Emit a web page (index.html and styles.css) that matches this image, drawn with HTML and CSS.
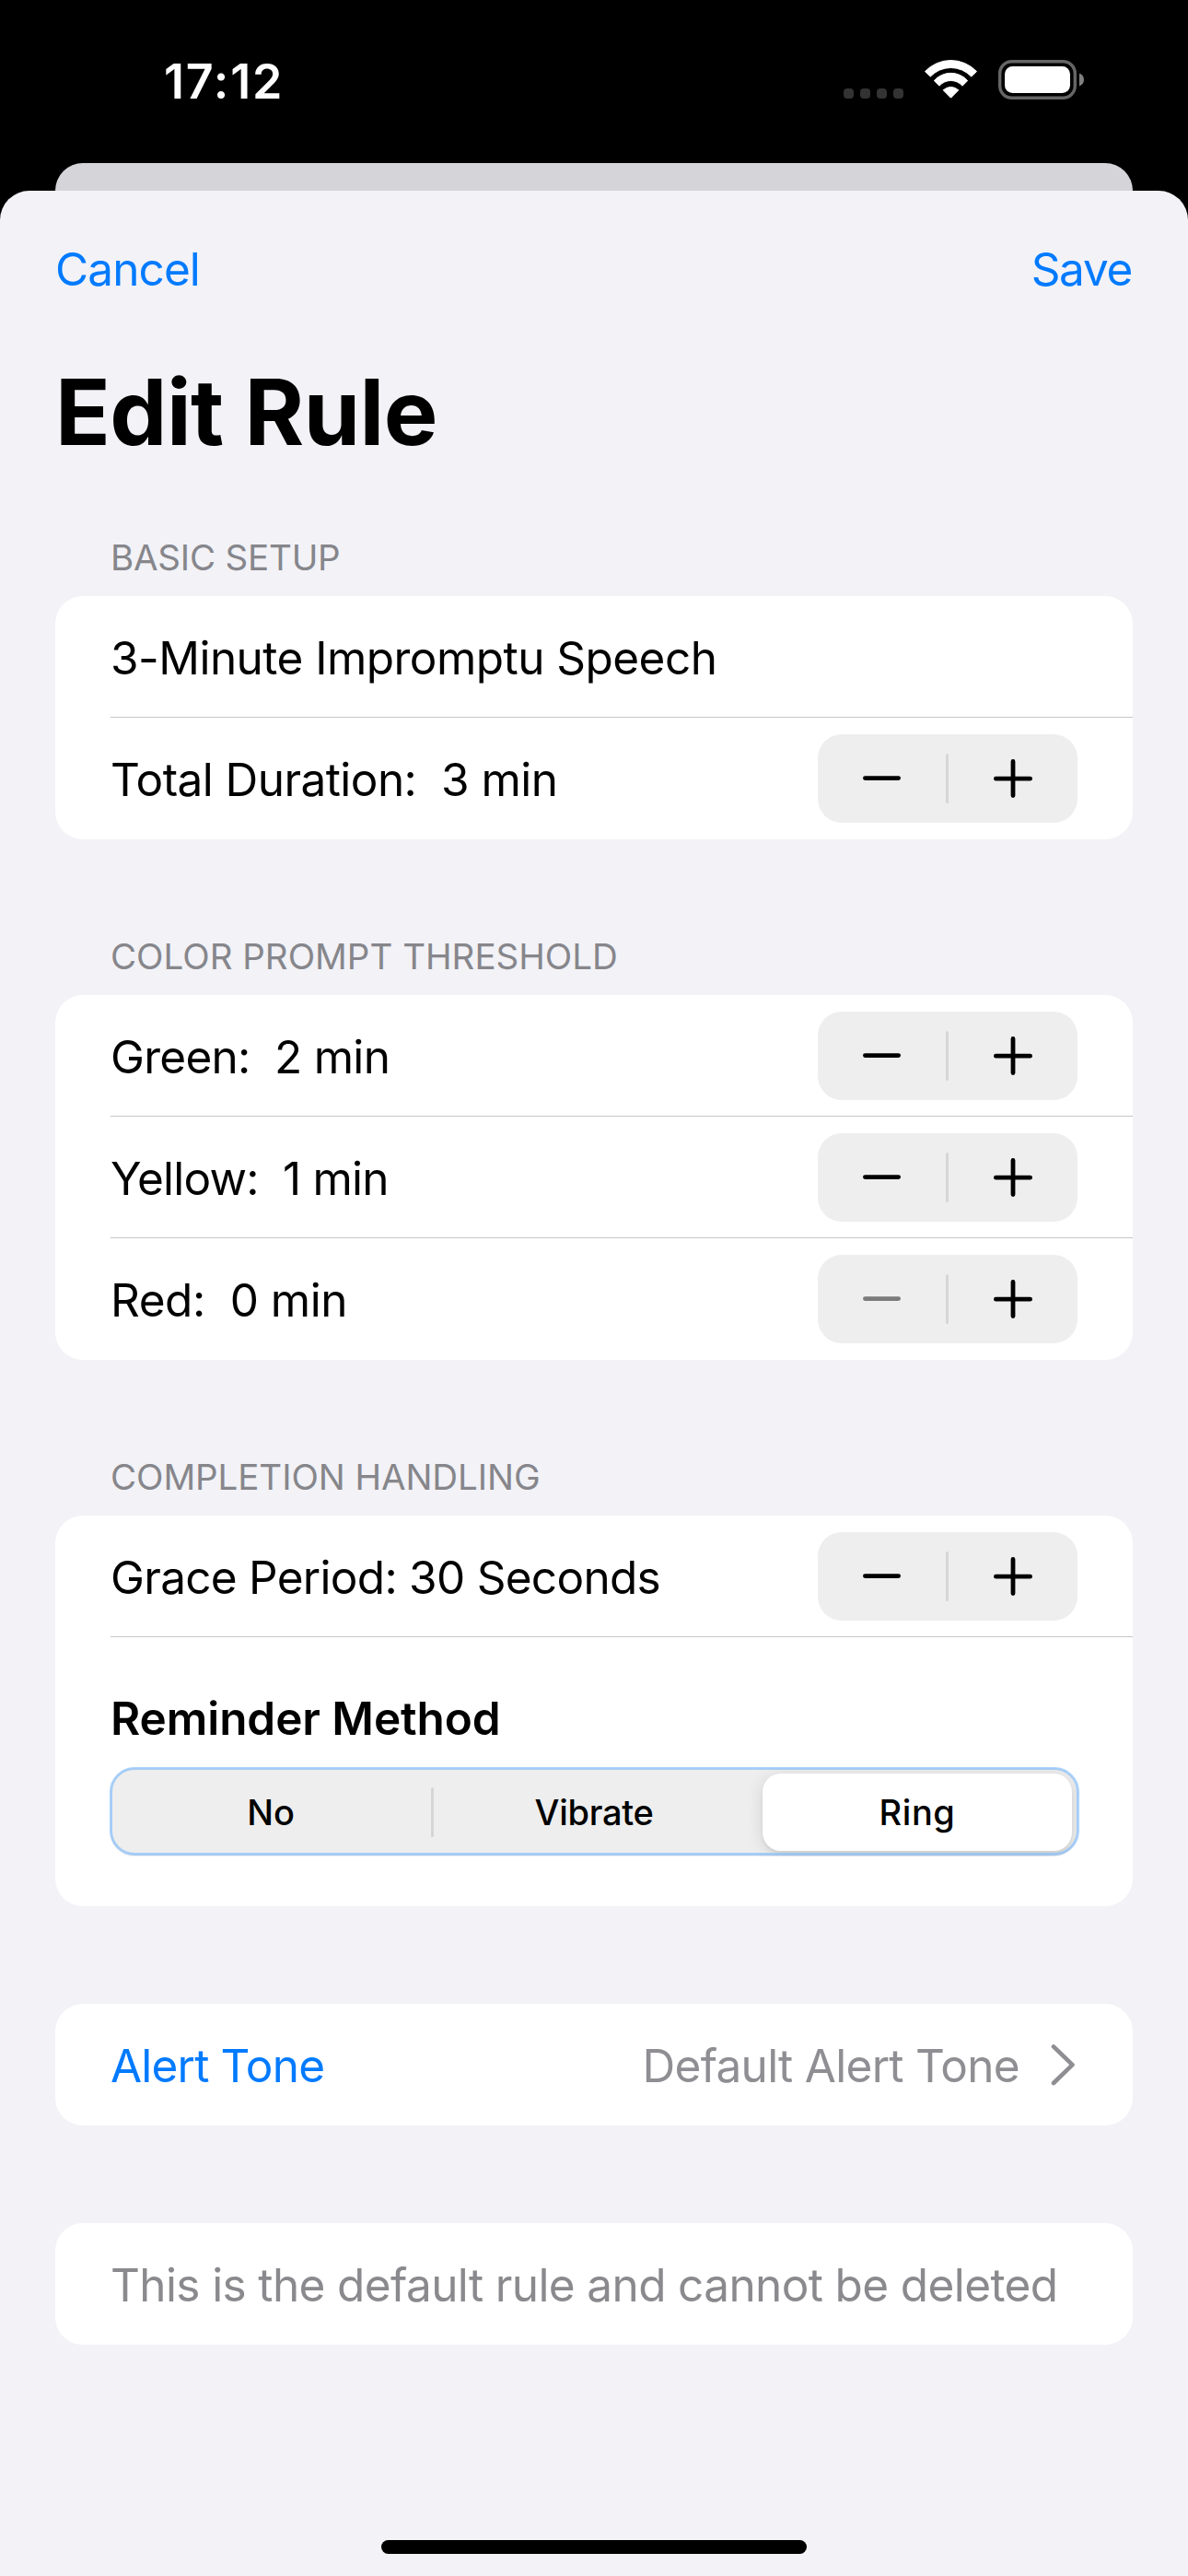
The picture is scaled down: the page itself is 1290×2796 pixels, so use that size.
FILE: index.html
```html
<!DOCTYPE html>
<html lang="en">
<head>
<meta charset="utf-8">
<title>Edit Rule</title>
<link rel="stylesheet" href="styles.css">
</head>
<body>
<svg class="defs" aria-hidden="true">
  <symbol id="minus" viewBox="0 0 42 42"><path d="M2.4 20.6H38.6" fill="none" stroke="currentColor" stroke-width="4.8" stroke-linecap="round"/></symbol>
  <symbol id="plus" viewBox="0 0 42 42"><path d="M2.4 21.2H39.6M21 2.4V39.6" fill="none" stroke="currentColor" stroke-width="4.8" stroke-linecap="round"/></symbol>
</svg>
<div class="screen">
  <header class="status">
    <span class="time">17:12</span>
    <div class="indicators">
      <svg width="65" height="43" viewBox="0 0 65 43" fill="#333"><rect x="0" y="31" width="11" height="11" rx="4"/><rect x="18" y="31" width="11" height="11" rx="4"/><rect x="36" y="31" width="11" height="11" rx="4"/><rect x="54" y="31" width="11" height="11" rx="4"/></svg>
      <svg width="57" height="43" viewBox="0 0 57 43" fill="#fff" stroke="#fff" stroke-width="1" stroke-linejoin="round"><path d="M.5 12.6A38.5 38.5 0 0 1 56.5 12.6L50.7 18.1A30.5 30.5 0 0 0 6.3 18.1Z"/><path d="M10.3 22.6A24.2 24.2 0 0 1 46.7 22.6L41 28.2A16.5 16.5 0 0 0 16 28.2Z"/><path d="M20.2 32.8Q28.5 26 36.8 32.8L28.5 41.2Z"/></svg>
      <svg width="93" height="43" viewBox="0 0 93 43"><rect x="1.7" y="1.7" width="81.6" height="39.6" rx="13" fill="none" stroke="#666" stroke-width="3.4"/><rect x="7" y="7" width="71" height="29" rx="8.5" fill="#fff"/><path d="M88 14.5Q93 16.5 93 21.5T88 28.5Z" fill="#808080"/></svg>
    </div>
  </header>
  <div class="backdrop"></div>
  <main class="sheet">
    <nav class="nav"><a class="cancel">Cancel</a><a class="save">Save</a></nav>
    <h1 class="title">Edit Rule</h1>

    <section class="group">
      <h2 class="caption caption-basic">BASIC SETUP</h2>
      <div class="card">
        <div class="row"><span class="label name">3-Minute Impromptu Speech</span></div>
        <div class="row"><span class="label total">Total Duration:  3 min</span>
          <div class="stepper"><svg><use href="#minus"/></svg><i></i><svg><use href="#plus"/></svg></div></div>
      </div>
    </section>

    <section class="group">
      <h2 class="caption">COLOR PROMPT THRESHOLD</h2>
      <div class="card">
        <div class="row"><span class="label">Green:  2 min</span>
          <div class="stepper"><svg><use href="#minus"/></svg><i></i><svg><use href="#plus"/></svg></div></div>
        <div class="row"><span class="label yellow">Yellow:  1 min</span>
          <div class="stepper"><svg><use href="#minus"/></svg><i></i><svg><use href="#plus"/></svg></div></div>
        <div class="row"><span class="label red">Red:  0 min</span>
          <div class="stepper"><svg class="off"><use href="#minus"/></svg><i></i><svg><use href="#plus"/></svg></div></div>
      </div>
    </section>

    <section class="group">
      <h2 class="caption caption-completion">COMPLETION HANDLING</h2>
      <div class="card">
        <div class="row"><span class="label">Grace Period: 30 Seconds</span>
          <div class="stepper"><svg><use href="#minus"/></svg><i></i><svg><use href="#plus"/></svg></div></div>
        <div class="method">
          <h3 class="method-title">Reminder Method</h3>
          <div class="segments">
            <span class="segment">No</span><i></i><span class="segment vibrate">Vibrate</span><span class="segment selected">Ring</span>
          </div>
        </div>
      </div>
    </section>

    <div class="card solo">
      <div class="row tone"><span class="label link">Alert Tone</span>
        <span class="value"><span class="label">Default Alert Tone</span>
        <svg width="27" height="46" viewBox="0 0 27 46"><path d="M3 3.4L23.5 23.2L3 43" fill="none" stroke="currentColor" stroke-width="4.6" stroke-linecap="round" stroke-linejoin="round"/></svg></span></div>
    </div>
    <div class="card solo">
      <div class="row"><span class="label note">This is the default rule and cannot be deleted</span></div>
    </div>
    <div class="home"></div>
  </main>
</div>
</body>
</html>
```
FILE: styles.css
```css
* { box-sizing: border-box; }
body {
  margin: 0;
  background: #000;
  font-family: Inter, "Liberation Sans", sans-serif;
  color: #000;
}
h1, h2, h3 { margin: 0; }
svg { display: block; }
.defs { display: none; }

.screen {
  width: 1290px;
  height: 2796px;
  display: flex;
  flex-direction: column;
  overflow: hidden;
}

/* Status bar */
.status {
  height: 177px;
  padding: 0 113px 0 178px;
  display: flex;
  justify-content: space-between;
  align-items: flex-start;
}
.time {
  margin-top: 57px;
  color: #fff;
  font-size: 52px;
  line-height: 63px;
  font-weight: 600;
  letter-spacing: 1.8px;
}
.indicators {
  margin-top: 65px;
  display: flex;
  gap: 23px;
}

/* Presented sheet */
.backdrop {
  height: 30px;
  margin: 0 60px;
  border-radius: 30px 30px 0 0;
  background: #d4d4d9;
}
.sheet {
  flex: 1;
  display: flex;
  flex-direction: column;
  padding: 0 60px 24px;
  border-radius: 32px 32px 0 0;
  background: #f2f2f7;
}
.nav {
  height: 170px;
  padding-right: 1px;
  display: flex;
  justify-content: space-between;
  align-items: center;
  color: #007aff;
  font-size: 49.5px;
}
.cancel { letter-spacing: -0.9px; }
.save { letter-spacing: -1.3px; }
.title {
  margin-top: 10px;
  font-size: 98.6px;
  line-height: 120px;
  font-weight: 700;
  letter-spacing: -0.55px;
}

/* Groups */
.group { margin-top: 104px; }
.title + .group { margin-top: 75px; }
.caption {
  margin: 0 60px 19px;
  font-size: 38.5px;
  line-height: 46px;
  font-weight: 400;
  color: #86868b;
}
.caption-basic { letter-spacing: -0.2px; }
.caption-completion { letter-spacing: -0.08px; }
.card {
  border-radius: 30px;
  background: #fff;
}
.solo { margin-top: 106px; }
.row {
  height: 132px;
  margin-left: 60px;
  padding-right: 60px;
  display: flex;
  justify-content: space-between;
  align-items: center;
}
.row:not(:last-child) { box-shadow: inset 0 -1px #c6c6c8; }
.label {
  padding-top: 1px;
  font-size: 49.5px;
  line-height: 60px;
  letter-spacing: -0.72px;
  white-space: pre;
}
.name { letter-spacing: -0.54px; }
.total { letter-spacing: -0.56px; }
.yellow { letter-spacing: -0.78px; }
.red { letter-spacing: -0.46px; }
.note { letter-spacing: -0.62px; color: #8a8a8e; }
.link { letter-spacing: -0.82px; color: #007aff; }
.tone { padding-right: 62px; }
.value {
  display: flex;
  align-items: center;
  gap: 34px;
  color: #8e8e93;
}

.stepper {
  width: 282px;
  height: 96px;
  display: grid;
  grid-template-columns: 139px 3px 140px;
  align-items: center;
  justify-items: center;
  border-radius: 26px;
  background: #eee;
}
.stepper svg { width: 42px; height: 42px; }
.stepper .off { color: #7b7b7b; }
.stepper i, .segments i {
  width: 3px;
  height: 54px;
  border-radius: 1.5px;
  background: #d6d6d7;
}

/* Reminder method */
.method {
  height: 292px;
  padding: 58px 60px 0;
}
.method-title {
  font-size: 49.5px;
  line-height: 60px;
  font-weight: 600;
  letter-spacing: -0.08px;
}
.segments {
  position: relative;
  height: 96px;
  margin-top: 24px;
  display: grid;
  grid-template-columns: 348px 3px 348px 351px;
  align-items: center;
  border-radius: 26px;
  background: #eee;
}
.segments::after {
  content: "";
  position: absolute;
  inset: -1.5px -1.5px 1px;
  border: 3px solid rgba(120, 182, 250, 0.62);
  border-radius: 27px;
}
.segment {
  text-align: center;
  font-size: 38px;
  line-height: 46px;
  font-weight: 500;
}
.vibrate { letter-spacing: -0.28px; }
.selected {
  height: 84px;
  margin: 0 6px 0 9px;
  line-height: 84px;
  letter-spacing: 0.6px;
  border-radius: 20px;
  background: #fff;
  box-shadow: 0 3px 3px rgba(0, 0, 0, 0.06), 0 3px 18px rgba(0, 0, 0, 0.12);
  clip-path: inset(-6px -6px -6px -30px round 26px);
}

.home {
  width: 462px;
  height: 15px;
  margin: auto auto 0;
  border-radius: 8px;
  background: #000;
}
```
